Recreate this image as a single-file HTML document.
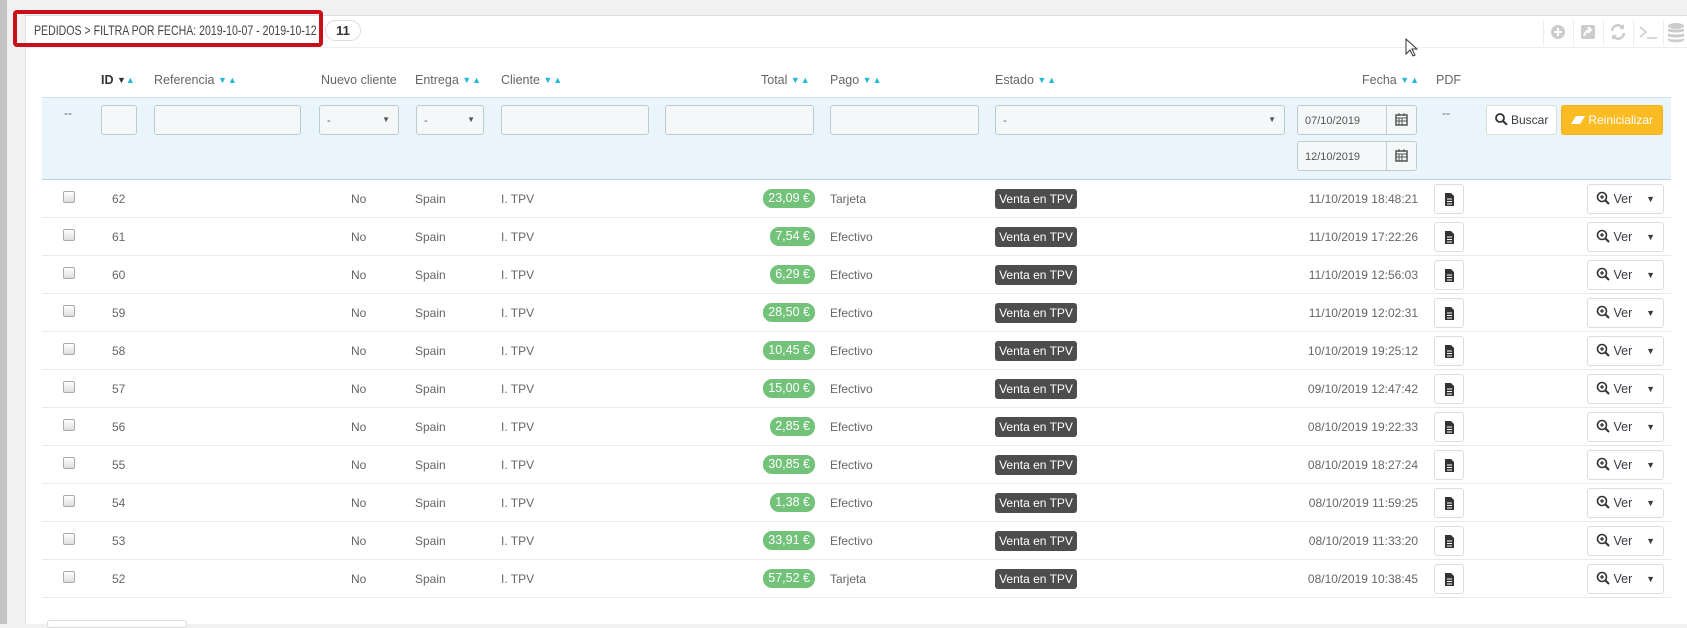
<!DOCTYPE html>
<html><head><meta charset="utf-8">
<style>
*{box-sizing:border-box;margin:0;padding:0}
body{width:1687px;height:624px;overflow:hidden;background:#f1f1f1;font-family:"Liberation Sans",sans-serif;font-size:12px;color:#666;position:relative}
.a{position:absolute}
.lbar{left:0;top:0;width:7px;height:624px;background:#c4c4c4}
.panel{left:25px;top:15px;width:1662px;height:609px;background:#fff;border-left:1px solid #e2e2e2;border-top:1px solid #dcdcdc}
.phead{left:25px;top:47px;width:1662px;height:1px;background:#eee}
.red{left:13px;top:10px;width:310px;height:37px;border:4px solid #c8101b;border-radius:4px}
.title{left:34px;top:22px;font-size:14px;color:#444;white-space:nowrap;transform-origin:0 0;transform:scaleX(.755)}
.badge11{left:325px;top:20px;width:36px;height:21px;border:1px solid #ddd;border-radius:11px;font-weight:bold;font-size:13px;color:#333;text-align:center;line-height:19px}
.ic{top:20px;width:30px;height:26px;border-left:1px solid #eee}
.th{top:73px;font-size:12.5px;color:#666;white-space:nowrap}
.s{color:#25b9d7;font-size:9px;vertical-align:1px;letter-spacing:1px}
.filter{left:42px;top:97px;width:1629px;height:83px;background:#eaf4fb;border-top:1px solid #cfe3ee;border-bottom:1px solid #b9d5e3}
.in{height:30px;background:#f5f8f9;border:1px solid #bbcdd2;border-radius:3px;font-size:11px;padding:9px 7px;color:#555}
.sel:after{content:"▼";position:absolute;right:8px;top:9px;font-size:8px;color:#555}
.cal{width:30px;height:30px;border:1px solid #bbcdd2;border-left:none;border-radius:0 3px 3px 0;background:#f5f8f9}
.btn{height:30px;border:1px solid #ddd;border-radius:3px;background:#fff;font-size:12px;line-height:28px;text-align:center;color:#363a41}
.row{left:42px;width:1629px;height:38px;border-bottom:1px solid #eaeaea}
.cb{width:12px;height:12px;border:1px solid #aaa;border-radius:2px;background:linear-gradient(#fff,#ddd)}
.t{white-space:nowrap}
.g{height:19px;background:#72c279;color:#fff;border-radius:9px;padding:0 5px;line-height:19px;font-size:12.5px}
.st{width:82px;height:20px;background:#4d4d4d;color:#fff;border-radius:3px;font-size:12px;line-height:20px;text-align:center}
.pdf{width:30px;height:30px;border:1px solid #ddd;border-radius:3px;background:#fff}
.ver{width:77px;height:30px;border:1px solid #ddd;border-radius:3px;background:#fff;font-size:12.5px;line-height:28px;color:#363a41}
</style></head><body>
<div class="a lbar"></div>
<div class="a panel"></div>
<div class="a phead"></div>
<div class="a red"></div>
<div class="a title">PEDIDOS &gt; FILTRA POR FECHA: 2019-10-07 - 2019-10-12</div>
<div class="a badge11">11</div>
<div class="a ic" style="left:1543px"><svg width="30" height="26"><circle cx="14" cy="12" r="7" fill="#ccc"/><path d="M14 8v8M10 12h8" stroke="#fff" stroke-width="2"/></svg></div>
<div class="a ic" style="left:1573px"><svg width="30" height="26"><rect x="7" y="5" width="14" height="14" rx="2" fill="#ccc"/><path d="M10 16c1-4 3-6 7-6M14 7l3 3-3 3" stroke="#fff" stroke-width="2" fill="none"/></svg></div>
<div class="a ic" style="left:1603px"><svg width="30" height="26"><path d="M8 11a6 6 0 0 1 11-3M20 13a6 6 0 0 1-11 3" stroke="#ccc" stroke-width="2.5" fill="none"/><path d="M20 4v5h-5zM8 20v-5h5z" fill="#ccc"/></svg></div>
<div class="a ic" style="left:1633px"><svg width="30" height="26"><path d="M6 7l6 5-6 5M13 18h10" stroke="#ccc" stroke-width="1.5" fill="none"/></svg></div>
<div class="a ic" style="left:1663px"><svg width="24" height="26"><ellipse cx="12" cy="6" rx="8" ry="3" fill="#ccc"/><path d="M4 8v3c0 2 16 2 16 0V8c0 2-16 2-16 0zM4 13v3c0 2 16 2 16 0v-3c0 2-16 2-16 0zM4 18v2c0 3 16 3 16 0v-2c0 2-16 2-16 0z" fill="#ccc"/></svg></div>
<svg class="a" style="left:1405px;top:38px" width="14" height="20"><path d="M1 1v15l4-4 3 6 2-1-3-6h5z" fill="#fff" stroke="#333"/></svg>

<div class="a th" style="left:101px;color:#333;font-weight:bold">ID <span style="font-size:9px;vertical-align:1px">▼</span><span class="s">▲</span></div>
<div class="a th" style="left:154px">Referencia <span class="s">▼▲</span></div>
<div class="a th" style="left:321px">Nuevo cliente</div>
<div class="a th" style="left:415px">Entrega <span class="s">▼▲</span></div>
<div class="a th" style="left:501px">Cliente <span class="s">▼▲</span></div>
<div class="a th" style="left:761px">Total <span class="s">▼▲</span></div>
<div class="a th" style="left:830px">Pago <span class="s">▼▲</span></div>
<div class="a th" style="left:995px">Estado <span class="s">▼▲</span></div>
<div class="a th" style="left:1362px">Fecha <span class="s">▼▲</span></div>
<div class="a th" style="left:1436px">PDF</div>

<div class="a filter"></div>
<div class="a" style="left:64px;top:106px">--</div>
<div class="a in" style="left:101px;top:105px;width:36px"></div>
<div class="a in" style="left:154px;top:105px;width:147px"></div>
<div class="a in sel" style="left:319px;top:105px;width:80px">-</div>
<div class="a in sel" style="left:416px;top:105px;width:68px">-</div>
<div class="a in" style="left:501px;top:105px;width:148px"></div>
<div class="a in" style="left:665px;top:105px;width:149px"></div>
<div class="a in" style="left:830px;top:105px;width:149px"></div>
<div class="a in sel" style="left:995px;top:105px;width:290px">-</div>
<div class="a in" style="left:1297px;top:105px;width:90px;border-radius:3px 0 0 3px">07/10/2019</div>
<div class="a cal" style="left:1387px;top:105px"><svg width="29" height="28"><rect x="9" y="9" width="11" height="10" fill="none" stroke="#555" stroke-width="1.5"/><path d="M9 12h11M12 7v3M17 7v3M12 12v7M15 12v7M9 15h11" stroke="#555"/></svg></div>
<div class="a in" style="left:1297px;top:141px;width:90px;border-radius:3px 0 0 3px">12/10/2019</div>
<div class="a cal" style="left:1387px;top:141px"><svg width="29" height="28"><rect x="9" y="9" width="11" height="10" fill="none" stroke="#555" stroke-width="1.5"/><path d="M9 12h11M12 7v3M17 7v3M12 12v7M15 12v7M9 15h11" stroke="#555"/></svg></div>
<div class="a" style="left:1442px;top:106px">--</div>
<div class="a btn" style="left:1486px;top:105px;width:71px"><svg width="13" height="12" style="vertical-align:-1px"><circle cx="5" cy="5" r="4" fill="none" stroke="#333" stroke-width="1.8"/><path d="M8 8l4 4" stroke="#333" stroke-width="2"/></svg> Buscar</div>
<div class="a btn" style="left:1561px;top:105px;width:102px;background:#fbbb22;border-color:#f9b31a;color:#fff"><svg width="14" height="10" style="vertical-align:-1px"><path d="M5 1h9L9 9H0z" fill="#fff"/></svg> Reinicializar</div>

<div id="rows"></div>
<div class="a" style="left:47px;top:620px;width:140px;height:8px;border:1px solid #ddd;border-radius:3px;background:#fff"></div>
<script>
var d=[["62","23,09","Tarjeta","11/10/2019 18:48:21"],["61","7,54","Efectivo","11/10/2019 17:22:26"],["60","6,29","Efectivo","11/10/2019 12:56:03"],["59","28,50","Efectivo","11/10/2019 12:02:31"],["58","10,45","Efectivo","10/10/2019 19:25:12"],["57","15,00","Efectivo","09/10/2019 12:47:42"],["56","2,85","Efectivo","08/10/2019 19:22:33"],["55","30,85","Efectivo","08/10/2019 18:27:24"],["54","1,38","Efectivo","08/10/2019 11:59:25"],["53","33,91","Efectivo","08/10/2019 11:33:20"],["52","57,52","Tarjeta","08/10/2019 10:38:45"]];
var h="";
d.forEach(function(r,i){var y=180+38*i,c=y+19;
h+='<div class="a row" style="top:'+y+'px"></div>'+
'<div class="a cb" style="left:63px;top:'+(c-8)+'px"></div>'+
'<div class="a t" style="left:112px;top:'+(c-7)+'px">'+r[0]+'</div>'+
'<div class="a t" style="left:351px;top:'+(c-7)+'px">No</div>'+
'<div class="a t" style="left:415px;top:'+(c-7)+'px">Spain</div>'+
'<div class="a t" style="left:501px;top:'+(c-7)+'px">I. TPV</div>'+
'<div class="a g" style="right:'+(1687-815)+'px;top:'+(c-10)+'px">'+r[1]+' €</div>'+
'<div class="a t" style="left:830px;top:'+(c-7)+'px">'+r[2]+'</div>'+
'<div class="a st" style="left:995px;top:'+(c-10)+'px">Venta en TPV</div>'+
'<div class="a t" style="right:'+(1687-1418)+'px;top:'+(c-7)+'px">'+r[3]+'</div>'+
'<div class="a pdf" style="left:1434px;top:'+(c-15)+'px"><svg width="28" height="28"><path d="M10 8h6l3 3v10h-9z" fill="#333"/><path d="M12 14h5M12 16.5h5M12 19h5" stroke="#fff"/></svg></div>'+
'<div class="a ver" style="left:1587px;top:'+(c-15)+'px"><svg width="14" height="14" style="margin-left:8px;vertical-align:-2px"><circle cx="6" cy="6" r="4.5" fill="none" stroke="#333" stroke-width="1.6"/><path d="M4 6h4M6 4v4" stroke="#333" stroke-width="1.3"/><path d="M9 9l4 4" stroke="#333" stroke-width="2"/></svg> Ver<span style="position:absolute;right:8px;font-size:9px">▼</span></div>';});
document.getElementById("rows").innerHTML=h;
</script>
</body></html>
